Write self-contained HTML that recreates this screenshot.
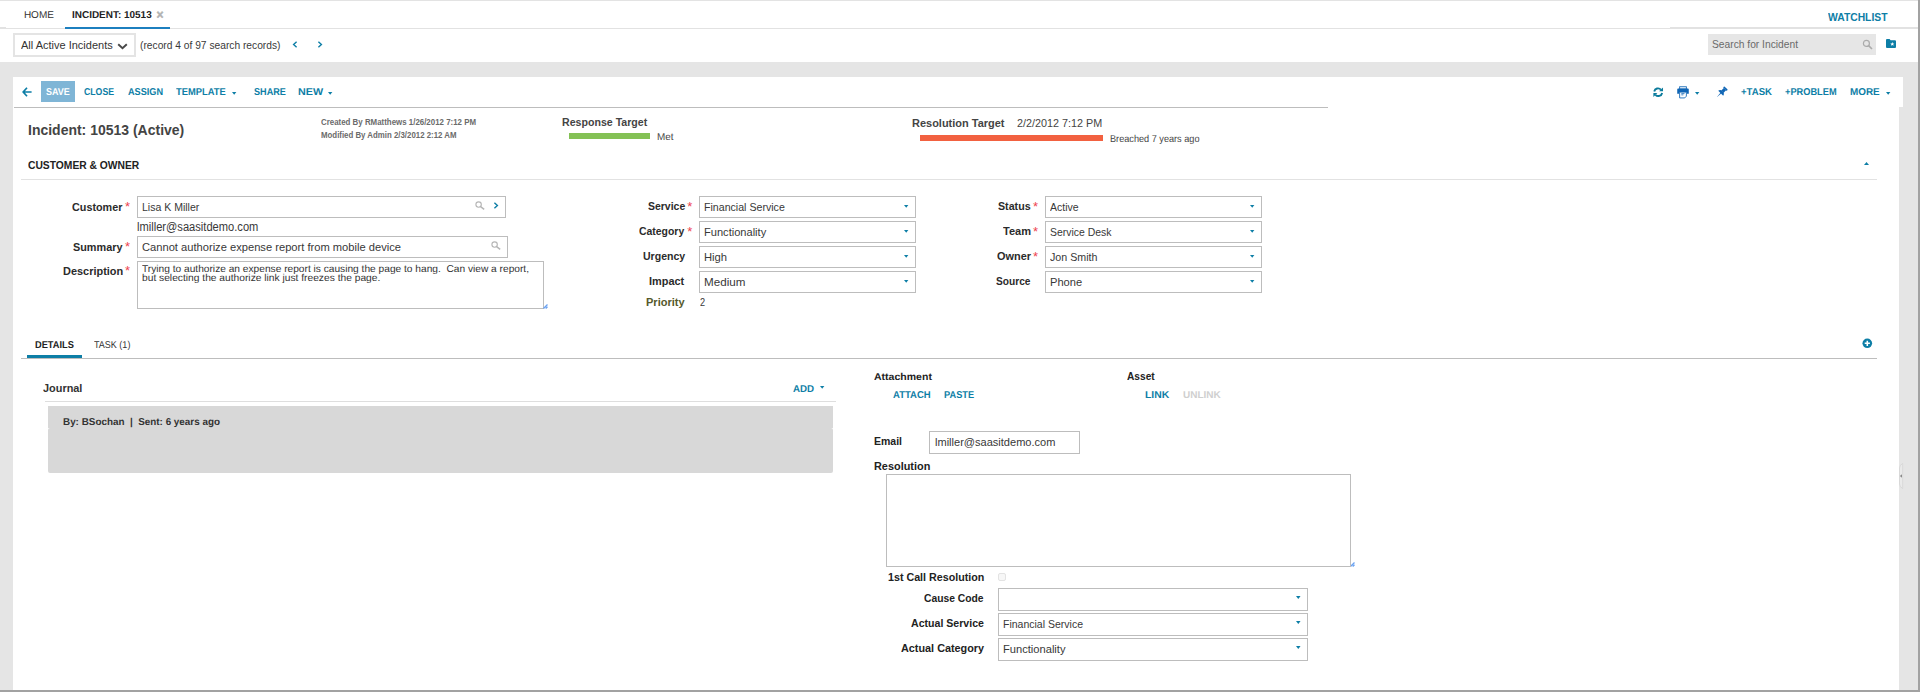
<!DOCTYPE html>
<html lang="en"><head><meta charset="utf-8"><title>Incident: 10513</title>
<style>
html,body{margin:0;padding:0;}
body{width:1920px;height:692px;overflow:hidden;background:#fff;position:relative;font-family:'Liberation Sans',sans-serif;}
.t{position:absolute;white-space:pre;line-height:20px;transform-origin:0 0;display:block;}
.g{text-rendering:geometricPrecision}
svg{position:absolute;overflow:visible}
</style></head>
<body>
<div class="grp" id="frame">
<div style="position:absolute;left:0px;top:0px;width:1918px;height:1px;background:#e3e3e3;"></div>
<div style="position:absolute;left:0px;top:28px;width:1918px;height:1px;background:#e2e2e2;"></div>
<div style="position:absolute;left:0px;top:27px;width:6px;height:1px;background:#e2e2e2;"></div>
<div style="position:absolute;left:1670px;top:27px;width:248px;height:1px;background:#e2e2e2;"></div>
<div style="position:absolute;left:0px;top:62px;width:1918px;height:15px;background:#e5e5e5;"></div>
<div style="position:absolute;left:0px;top:62px;width:13px;height:628px;background:#e5e5e5;"></div>
<div style="position:absolute;left:1903px;top:62px;width:15px;height:628px;background:#e5e5e5;"></div>
<div style="position:absolute;left:1899px;top:107px;width:4px;height:583px;background:#e5e5e5;"></div>
<div style="position:absolute;left:1918px;top:0px;width:2px;height:692px;background:#a2a2a2;"></div>
<div style="position:absolute;left:0px;top:690px;width:1920px;height:2px;background:#a2a2a2;"></div>
<svg style="left:1899px;top:463px" width="4" height="26" viewBox="0 0 4 26"><path d="M3.7 0.5 Q0.5 2 0.5 5 L0.5 21 Q0.5 24 3.7 25.5 Z" fill="#eaeaea" stroke="#d4d4d4" stroke-width="0.8"/><path d="M3 11.2 L0.8 13 L3 14.8 Z" fill="#8a8a8a"/></svg>
</div>
<div class="grp" id="recordbar">
<div style="position:absolute;left:13px;top:33px;width:119px;height:20px;border:2px solid #e4e4e4;background:#fff"></div>
<svg style="left:117px;top:43px" width="11" height="7" viewBox="0 0 11 7"><path d="M1.2 1.2 L5.5 5.3 L9.8 1.2" fill="none" stroke="#484848" stroke-width="1.9"/></svg>
<svg style="left:292px;top:41px" width="6" height="7" viewBox="0 0 6 7"><path d="M4.6 0.8 L1.6 3.5 L4.6 6.2" fill="none" stroke="#0d7ea6" stroke-width="1.4"/></svg>
<svg style="left:317px;top:41px" width="6" height="7" viewBox="0 0 6 7"><path d="M1.4 0.8 L4.4 3.5 L1.4 6.2" fill="none" stroke="#0d7ea6" stroke-width="1.4"/></svg>
<div style="position:absolute;left:1708px;top:34px;width:168px;height:21px;background:#e6e6e6;"></div>
<svg style="left:1862px;top:39px" width="11" height="11" viewBox="0 0 11 11"><circle cx="4.4" cy="4.4" r="3" fill="none" stroke="#ababab" stroke-width="1.2"/><path d="M6.6 6.6 L10 10" stroke="#ababab" stroke-width="1.6"/></svg>
<svg style="left:1886px;top:39px" width="10" height="9" viewBox="0 0 10 9"><path d="M0 1 Q0 0 1 0 L3.6 0 L4.6 1.2 L9 1.2 Q10 1.2 10 2.2 L10 8 Q10 9 9 9 L1 9 Q0 9 0 8 Z" fill="#0d7ea6"/><path d="M6.3 3 L6.9 4.4 L8.3 4.5 L7.2 5.4 L7.6 6.8 L6.3 6 L5 6.8 L5.4 5.4 L4.3 4.5 L5.7 4.4 Z" fill="#fff"/></svg>
<span class="t" style="left:20.60px;top:35px;font-size:11px;font-weight:400;color:#333;transform:scaleX(0.9998);">All Active Incidents</span>
<span class="t" style="left:140.30px;top:35px;font-size:11px;font-weight:400;color:#3a3a3a;transform:scaleX(0.9304);">(record 4 of 97 search records)</span>
<span class="t" style="left:1712.00px;top:34px;font-size:11px;font-weight:400;color:#6a6a6a;transform:scaleX(0.9313);">Search for Incident</span>
</div>
<div class="grp" id="toolbar">
<div style="position:absolute;left:14px;top:107px;width:1314px;height:1px;background:#bdbdbd;"></div>
<div style="position:absolute;left:41px;top:81px;width:34px;height:21px;background:#7fb5d6;"></div>
<svg style="left:22px;top:87px" width="10" height="10" viewBox="0 0 10 10"><path d="M5 0.8 L1.2 5 L5 9.2 M1.4 5 L9.6 5" fill="none" stroke="#0d7ea6" stroke-width="1.7"/></svg>
<svg style="left:231.8px;top:91.7px" width="4.4" height="2.8" viewBox="0 0 4.4 2.8"><path d="M0 0 L4.4 0 L2.2 2.8 Z" fill="#0d7ea6"/></svg>
<svg style="left:327.7px;top:91.7px" width="4.4" height="2.8" viewBox="0 0 4.4 2.8"><path d="M0 0 L4.4 0 L2.2 2.8 Z" fill="#0d7ea6"/></svg>
<svg style="left:1694.6px;top:91.7px" width="4.4" height="2.8" viewBox="0 0 4.4 2.8"><path d="M0 0 L4.4 0 L2.2 2.8 Z" fill="#0d7ea6"/></svg>
<svg style="left:1885.6px;top:91.7px" width="4.4" height="2.8" viewBox="0 0 4.4 2.8"><path d="M0 0 L4.4 0 L2.2 2.8 Z" fill="#0d7ea6"/></svg>
<svg style="left:1652.5px;top:87px" width="10.4" height="10.4" viewBox="0 0 11 11"><g fill="none" stroke="#0b7b9c" stroke-width="2"><path d="M1.3 4.7 A4.2 4.2 0 0 1 8.4 2.7"/><path d="M9.7 6.3 A4.2 4.2 0 0 1 2.6 8.3"/></g><path d="M10.6 0.4 L10.6 4.6 L6.4 4.6 Z M0.4 10.6 L0.4 6.4 L4.6 6.4 Z" fill="#0b7b9c"/></svg>
<svg style="left:1677px;top:85.6px" width="12" height="12.5" viewBox="0 0 12 13"><rect x="2.5" y="0.8" width="7" height="2.4" fill="#fff" stroke="#0f65b5" stroke-width="0.9"/><path d="M0 3.6 Q0 2.6 1 2.6 L11 2.6 Q12 2.6 12 3.6 L12 8 L9.6 8 L9.6 6.2 L2.4 6.2 L2.4 8 L0 8 Z" fill="#0f65b5"/><path d="M2.5 6.4 L9.5 6.4 L9.5 10.6 L7.8 12.4 L2.5 12.4 Z" fill="#fff" stroke="#0f65b5" stroke-width="0.9"/><path d="M4.2 7.9 L7.6 7.9 M4.2 9.2 L6.4 9.2" stroke="#0f65b5" stroke-width="1" opacity="0.8"/></svg>
<svg style="left:1716px;top:86.5px" width="11" height="11" viewBox="0 0 11 11"><g transform="rotate(45 5.5 5.5)" fill="#0f65b5"><rect x="3" y="-0.9" width="5" height="1.7" rx="0.6"/><rect x="3.9" y="0.6" width="3.2" height="3.6"/><path d="M3.9 4 L7.1 4 Q8.9 4.9 9 6.6 L2 6.6 Q2.1 4.9 3.9 4 Z"/><path d="M5 6.4 L6 6.4 L5.6 11.8 L5.4 11.8 Z"/></g></svg>
<span class="t g" style="left:46.00px;top:83px;font-size:10px;font-weight:700;color:#fff;transform:scaleX(0.8962);">SAVE</span>
<span class="t g" style="left:84.00px;top:83px;font-size:10px;font-weight:700;color:#0d7ea6;transform:scaleX(0.8707);">CLOSE</span>
<span class="t g" style="left:127.70px;top:83px;font-size:10px;font-weight:700;color:#0d7ea6;transform:scaleX(0.9141);">ASSIGN</span>
<span class="t g" style="left:176.25px;top:83px;font-size:10px;font-weight:700;color:#0d7ea6;transform:scaleX(0.9359);">TEMPLATE</span>
<span class="t g" style="left:254.40px;top:83px;font-size:10px;font-weight:700;color:#0d7ea6;transform:scaleX(0.9096);">SHARE</span>
<span class="t g" style="left:298.40px;top:83px;font-size:10px;font-weight:700;color:#0d7ea6;transform:scaleX(1.0752);">NEW</span>
<span class="t g" style="left:1741.00px;top:83px;font-size:10px;font-weight:700;color:#0d7ea6;transform:scaleX(0.9589);">+TASK</span>
<span class="t g" style="left:1784.70px;top:83px;font-size:10px;font-weight:700;color:#0d7ea6;transform:scaleX(0.9240);">+PROBLEM</span>
<span class="t g" style="left:1850.30px;top:83px;font-size:10px;font-weight:700;color:#0d7ea6;transform:scaleX(0.9900);">MORE</span>
</div>
<header class="grp" id="header">
<div style="position:absolute;left:569px;top:133px;width:81px;height:6px;background:#84c155;"></div>
<div style="position:absolute;left:920px;top:135px;width:183px;height:6px;background:#f26140;"></div>
<div style="position:absolute;left:21px;top:179px;width:1856px;height:1px;background:#e2e2e2;"></div>
<svg style="left:1864px;top:162px" width="5" height="3" viewBox="0 0 5 3"><path d="M0 3 L5 3 L2.5 0 Z" fill="#0d7ea6"/></svg>
<span class="t" style="left:28.00px;top:120px;font-size:14.5px;font-weight:700;color:#444;transform:scaleX(0.9646);">Incident: 10513 (Active)</span>
<span class="t" style="left:320.50px;top:112px;font-size:9px;font-weight:700;color:#6b6b6b;transform:scaleX(0.8778);">Created By RMatthews 1/26/2012 7:12 PM</span>
<span class="t" style="left:320.50px;top:125px;font-size:9px;font-weight:700;color:#6b6b6b;transform:scaleX(0.8721);">Modified By Admin 2/3/2012 2:12 AM</span>
<span class="t" style="left:561.75px;top:112px;font-size:11.5px;font-weight:700;color:#444;transform:scaleX(0.9221);">Response Target</span>
<span class="t g" style="left:656.50px;top:128px;font-size:10px;font-weight:400;color:#444;transform:scaleX(0.9897);">Met</span>
<span class="t" style="left:911.50px;top:113px;font-size:11.5px;font-weight:700;color:#444;transform:scaleX(0.9545);">Resolution Target</span>
<span class="t" style="left:1016.75px;top:113px;font-size:11.5px;font-weight:400;color:#444;transform:scaleX(0.9389);">2/2/2012 7:12 PM</span>
<span class="t g" style="left:1109.50px;top:130px;font-size:10px;font-weight:400;color:#444;transform:scaleX(0.9147);">Breached 7 years ago</span>
</header>
<section class="grp" id="form">
<div style="position:absolute;left:137px;top:196px;width:367px;height:20px;background:#fff;border:1px solid #bdbdbd;"></div>
<div style="position:absolute;left:137px;top:236px;width:369px;height:20px;background:#fff;border:1px solid #bdbdbd;"></div>
<div style="position:absolute;left:137px;top:261px;width:405px;height:46px;background:#fff;border:1px solid #bdbdbd;"></div>
<svg style="left:475px;top:201px" width="10" height="9" viewBox="0 0 10 9"><circle cx="3.6" cy="3.6" r="2.7" fill="none" stroke="#b5b5b5" stroke-width="1.1"/><path d="M5.6 5.6 L9.2 8.4" stroke="#b5b5b5" stroke-width="1.4"/></svg>
<svg style="left:491px;top:240.9px" width="10" height="9" viewBox="0 0 10 9"><circle cx="3.6" cy="3.6" r="2.7" fill="none" stroke="#b5b5b5" stroke-width="1.1"/><path d="M5.6 5.6 L9.2 8.4" stroke="#b5b5b5" stroke-width="1.4"/></svg>
<svg style="left:493px;top:202px" width="6" height="7" viewBox="0 0 6 7"><path d="M1.4 0.8 L4.4 3.5 L1.4 6.2" fill="none" stroke="#0d7ea6" stroke-width="1.4"/></svg>
<svg style="left:543px;top:304px" width="5" height="5" viewBox="0 0 5 5"><path d="M4.5 0.5 L0.5 4.5 M4.5 2.7 L2.7 4.5" stroke="#6aa2f2" stroke-width="1.3"/></svg>
<svg style="left:1350px;top:562px" width="5" height="5" viewBox="0 0 5 5"><path d="M4.5 0.5 L0.5 4.5 M4.5 2.7 L2.7 4.5" stroke="#6aa2f2" stroke-width="1.3"/></svg>
<div style="position:absolute;left:699px;top:196px;width:215px;height:20px;background:#fff;border:1px solid #bdbdbd;"></div>
<svg style="left:903.7px;top:204.6px" width="4.4" height="2.7" viewBox="0 0 4.4 2.7"><path d="M0 0 L4.4 0 L2.2 2.7 Z" fill="#0d7ea6"/></svg>
<div style="position:absolute;left:1045px;top:196px;width:215px;height:20px;background:#fff;border:1px solid #bdbdbd;"></div>
<svg style="left:1250px;top:204.6px" width="4.4" height="2.7" viewBox="0 0 4.4 2.7"><path d="M0 0 L4.4 0 L2.2 2.7 Z" fill="#0d7ea6"/></svg>
<div style="position:absolute;left:699px;top:221px;width:215px;height:20px;background:#fff;border:1px solid #bdbdbd;"></div>
<svg style="left:903.7px;top:229.6px" width="4.4" height="2.7" viewBox="0 0 4.4 2.7"><path d="M0 0 L4.4 0 L2.2 2.7 Z" fill="#0d7ea6"/></svg>
<div style="position:absolute;left:1045px;top:221px;width:215px;height:20px;background:#fff;border:1px solid #bdbdbd;"></div>
<svg style="left:1250px;top:229.6px" width="4.4" height="2.7" viewBox="0 0 4.4 2.7"><path d="M0 0 L4.4 0 L2.2 2.7 Z" fill="#0d7ea6"/></svg>
<div style="position:absolute;left:699px;top:246px;width:215px;height:20px;background:#fff;border:1px solid #bdbdbd;"></div>
<svg style="left:903.7px;top:254.6px" width="4.4" height="2.7" viewBox="0 0 4.4 2.7"><path d="M0 0 L4.4 0 L2.2 2.7 Z" fill="#0d7ea6"/></svg>
<div style="position:absolute;left:1045px;top:246px;width:215px;height:20px;background:#fff;border:1px solid #bdbdbd;"></div>
<svg style="left:1250px;top:254.6px" width="4.4" height="2.7" viewBox="0 0 4.4 2.7"><path d="M0 0 L4.4 0 L2.2 2.7 Z" fill="#0d7ea6"/></svg>
<div style="position:absolute;left:699px;top:271px;width:215px;height:20px;background:#fff;border:1px solid #bdbdbd;"></div>
<svg style="left:903.7px;top:279.6px" width="4.4" height="2.7" viewBox="0 0 4.4 2.7"><path d="M0 0 L4.4 0 L2.2 2.7 Z" fill="#0d7ea6"/></svg>
<div style="position:absolute;left:1045px;top:271px;width:215px;height:20px;background:#fff;border:1px solid #bdbdbd;"></div>
<svg style="left:1250px;top:279.6px" width="4.4" height="2.7" viewBox="0 0 4.4 2.7"><path d="M0 0 L4.4 0 L2.2 2.7 Z" fill="#0d7ea6"/></svg>
<span class="t" style="left:27.50px;top:155px;font-size:11.5px;font-weight:700;color:#222;transform:scaleX(0.8945);">CUSTOMER &amp; OWNER</span>
<span class="t" style="left:72.30px;top:197px;font-size:11.5px;font-weight:700;color:#2b2b2b;transform:scaleX(0.9388);">Customer</span>
<span class="t" style="left:73.25px;top:237px;font-size:11.5px;font-weight:700;color:#2b2b2b;transform:scaleX(0.9433);">Summary</span>
<span class="t" style="left:62.50px;top:261px;font-size:11.5px;font-weight:700;color:#2b2b2b;transform:scaleX(0.9515);">Description</span>
<span class="t" style="left:125.00px;top:197px;font-size:13px;font-weight:400;color:#ee4450;transform:scaleX(1.0000);">*</span>
<span class="t" style="left:125.00px;top:237px;font-size:13px;font-weight:400;color:#ee4450;transform:scaleX(1.0000);">*</span>
<span class="t" style="left:125.00px;top:261px;font-size:13px;font-weight:400;color:#ee4450;transform:scaleX(1.0000);">*</span>
<span class="t" style="left:142.00px;top:197px;font-size:11px;font-weight:400;color:#383838;transform:scaleX(0.9557);">Lisa K Miller</span>
<span class="t" style="left:137.00px;top:217px;font-size:12px;font-weight:400;color:#383838;transform:scaleX(0.9275);">lmiller@saasitdemo.com</span>
<span class="t" style="left:142.00px;top:237px;font-size:11px;font-weight:400;color:#383838;transform:scaleX(1.0133);">Cannot authorize expense report from mobile device</span>
<span class="t g" style="left:142.00px;top:260px;font-size:10px;font-weight:400;color:#333;transform:scaleX(1.0173);">Trying to authorize an expense report is causing the page to hang.  Can view a report,</span>
<span class="t g" style="left:142.00px;top:269px;font-size:10px;font-weight:400;color:#333;transform:scaleX(1.0231);">but selecting the authorize link just freezes the page.</span>
<span class="t" style="left:647.80px;top:196px;font-size:11.5px;font-weight:700;color:#2b2b2b;transform:scaleX(0.9087);">Service</span>
<span class="t" style="left:638.80px;top:221px;font-size:11.5px;font-weight:700;color:#2b2b2b;transform:scaleX(0.9065);">Category</span>
<span class="t" style="left:642.80px;top:246px;font-size:11.5px;font-weight:700;color:#2b2b2b;transform:scaleX(0.9168);">Urgency</span>
<span class="t" style="left:648.80px;top:271px;font-size:11.5px;font-weight:700;color:#2b2b2b;transform:scaleX(0.9493);">Impact</span>
<span class="t" style="left:646.30px;top:292px;font-size:11.5px;font-weight:700;color:#55592c;transform:scaleX(0.9611);">Priority</span>
<span class="t" style="left:687.30px;top:197px;font-size:13px;font-weight:400;color:#ee4450;transform:scaleX(1.0000);">*</span>
<span class="t" style="left:687.30px;top:222px;font-size:13px;font-weight:400;color:#ee4450;transform:scaleX(1.0000);">*</span>
<span class="t" style="left:703.60px;top:197px;font-size:11px;font-weight:400;color:#383838;transform:scaleX(0.9646);">Financial Service</span>
<span class="t" style="left:703.60px;top:222px;font-size:11px;font-weight:400;color:#383838;transform:scaleX(1.0070);">Functionality</span>
<span class="t" style="left:703.60px;top:247px;font-size:11px;font-weight:400;color:#383838;transform:scaleX(1.0210);">High</span>
<span class="t" style="left:703.60px;top:272px;font-size:11px;font-weight:400;color:#383838;transform:scaleX(1.0581);">Medium</span>
<span class="t" style="left:699.90px;top:292px;font-size:11px;font-weight:400;color:#383838;transform:scaleX(0.8327);">2</span>
<span class="t" style="left:998.40px;top:196px;font-size:11.5px;font-weight:700;color:#2b2b2b;transform:scaleX(0.9273);">Status</span>
<span class="t" style="left:1003.00px;top:221px;font-size:11.5px;font-weight:700;color:#2b2b2b;transform:scaleX(0.9588);">Team</span>
<span class="t" style="left:997.00px;top:246px;font-size:11.5px;font-weight:700;color:#2b2b2b;transform:scaleX(0.9498);">Owner</span>
<span class="t" style="left:995.50px;top:271px;font-size:11.5px;font-weight:700;color:#2b2b2b;transform:scaleX(0.8846);">Source</span>
<span class="t" style="left:1033.00px;top:197px;font-size:13px;font-weight:400;color:#ee4450;transform:scaleX(1.0000);">*</span>
<span class="t" style="left:1033.00px;top:222px;font-size:13px;font-weight:400;color:#ee4450;transform:scaleX(1.0000);">*</span>
<span class="t" style="left:1033.00px;top:247px;font-size:13px;font-weight:400;color:#ee4450;transform:scaleX(1.0000);">*</span>
<span class="t" style="left:1050.40px;top:197px;font-size:11px;font-weight:400;color:#383838;transform:scaleX(0.9543);">Active</span>
<span class="t" style="left:1050.40px;top:222px;font-size:11px;font-weight:400;color:#383838;transform:scaleX(0.9491);">Service Desk</span>
<span class="t" style="left:1050.40px;top:247px;font-size:11px;font-weight:400;color:#383838;transform:scaleX(0.9709);">Jon Smith</span>
<span class="t" style="left:1050.40px;top:272px;font-size:11px;font-weight:400;color:#383838;transform:scaleX(1.0122);">Phone</span>
</section>
<nav class="grp" id="subtabs">
<div style="position:absolute;left:21px;top:358px;width:1856px;height:1px;background:#bdbdbd;"></div>
<div style="position:absolute;left:27px;top:355px;width:55px;height:3px;background:#0d7ea6;"></div>
<svg style="left:1861.5px;top:338.2px" width="10.6" height="10.6" viewBox="0 0 11 11"><circle cx="5.5" cy="5.5" r="5" fill="#0d7ea6"/><path d="M5.5 2.8 V8.2 M2.8 5.5 H8.2" stroke="#fff" stroke-width="1.6"/></svg>
<span class="t g" style="left:35.00px;top:336px;font-size:10px;font-weight:700;color:#222;transform:scaleX(0.9252);">DETAILS</span>
<span class="t g" style="left:93.80px;top:336px;font-size:10px;font-weight:400;color:#333;transform:scaleX(0.9012);">TASK (1)</span>
</nav>
<section class="grp" id="journal">
<div style="position:absolute;left:45px;top:401px;width:791px;height:1px;background:#dedede;"></div>
<div style="position:absolute;left:48px;top:406px;width:785px;height:22px;background:#d8d8d8;"></div>
<div style="position:absolute;left:48px;top:428px;width:785px;height:45px;background:#d8d8d8;border-radius:2px;"></div>
<svg style="left:819.7px;top:386px" width="4.4" height="2.7" viewBox="0 0 4.4 2.7"><path d="M0 0 L4.4 0 L2.2 2.7 Z" fill="#0d7ea6"/></svg>
<span class="t" style="left:43.40px;top:378px;font-size:11.5px;font-weight:700;color:#333;transform:scaleX(0.9483);">Journal</span>
<span class="t g" style="left:793.40px;top:380px;font-size:10px;font-weight:700;color:#0d7ea6;transform:scaleX(0.9736);">ADD</span>
<span class="t g" style="left:62.50px;top:413px;font-size:10px;font-weight:700;color:#333;transform:scaleX(0.9876);">By: BSochan  |  Sent: 6 years ago</span>
</section>
<section class="grp" id="details">
<div style="position:absolute;left:929px;top:431px;width:149px;height:21px;background:#fff;border:1px solid #bdbdbd;"></div>
<div style="position:absolute;left:886px;top:474px;width:463px;height:91px;background:#fff;border:1px solid #bdbdbd;"></div>
<div style="position:absolute;left:998px;top:573px;width:6px;height:6px;background:#f7f7f7;border:1px solid #e3e3e3;border-radius:2px;"></div>
<div style="position:absolute;left:998px;top:588px;width:308px;height:21px;background:#fff;border:1px solid #bdbdbd;"></div>
<svg style="left:1295.8px;top:596.3px" width="4.6" height="2.9" viewBox="0 0 4.6 2.9"><path d="M0 0 L4.6 0 L2.3 2.9 Z" fill="#0d7ea6"/></svg>
<div style="position:absolute;left:998px;top:613px;width:308px;height:21px;background:#fff;border:1px solid #bdbdbd;"></div>
<svg style="left:1295.8px;top:621.3px" width="4.6" height="2.9" viewBox="0 0 4.6 2.9"><path d="M0 0 L4.6 0 L2.3 2.9 Z" fill="#0d7ea6"/></svg>
<div style="position:absolute;left:998px;top:638px;width:308px;height:21px;background:#fff;border:1px solid #bdbdbd;"></div>
<svg style="left:1295.8px;top:646.3px" width="4.6" height="2.9" viewBox="0 0 4.6 2.9"><path d="M0 0 L4.6 0 L2.3 2.9 Z" fill="#0d7ea6"/></svg>
<span class="t g" style="left:874.30px;top:368px;font-size:10px;font-weight:700;color:#222;transform:scaleX(1.0524);">Attachment</span>
<span class="t g" style="left:893.00px;top:386px;font-size:10px;font-weight:700;color:#0d7ea6;transform:scaleX(0.9514);">ATTACH</span>
<span class="t g" style="left:944.20px;top:386px;font-size:10px;font-weight:700;color:#0d7ea6;transform:scaleX(0.9230);">PASTE</span>
<span class="t" style="left:1127.00px;top:366px;font-size:11.5px;font-weight:700;color:#222;transform:scaleX(0.8842);">Asset</span>
<span class="t g" style="left:1144.50px;top:386px;font-size:10px;font-weight:700;color:#0d7ea6;transform:scaleX(1.0388);">LINK</span>
<span class="t g" style="left:1183.00px;top:386px;font-size:10px;font-weight:700;color:#cfcfcf;transform:scaleX(1.0005);">UNLINK</span>
<span class="t" style="left:874.30px;top:431px;font-size:11.5px;font-weight:700;color:#222;transform:scaleX(0.9124);">Email</span>
<span class="t" style="left:934.80px;top:432px;font-size:11px;font-weight:400;color:#383838;transform:scaleX(1.0035);">lmiller@saasitdemo.com</span>
<span class="t" style="left:874.30px;top:456px;font-size:11.5px;font-weight:700;color:#222;transform:scaleX(0.9475);">Resolution</span>
<span class="t" style="left:887.90px;top:567px;font-size:11.5px;font-weight:700;color:#222;transform:scaleX(0.9302);">1st Call Resolution</span>
<span class="t" style="left:923.60px;top:588px;font-size:11.5px;font-weight:700;color:#222;transform:scaleX(0.8967);">Cause Code</span>
<span class="t" style="left:910.80px;top:613px;font-size:11.5px;font-weight:700;color:#222;transform:scaleX(0.9197);">Actual Service</span>
<span class="t" style="left:901.10px;top:638px;font-size:11.5px;font-weight:700;color:#222;transform:scaleX(0.9423);">Actual Category</span>
<span class="t" style="left:1003.20px;top:614px;font-size:11px;font-weight:400;color:#383838;transform:scaleX(0.9550);">Financial Service</span>
<span class="t" style="left:1003.20px;top:639px;font-size:11px;font-weight:400;color:#383838;transform:scaleX(1.0119);">Functionality</span>
</section>
<nav class="grp" id="tabs">
<div style="position:absolute;left:65px;top:27px;width:105px;height:2px;background:#1c7fbf;"></div>
<span class="t g" style="left:23.90px;top:6px;font-size:10px;font-weight:400;color:#333;transform:scaleX(1.0000);">HOME</span>
<span class="t g" style="left:72.20px;top:6px;font-size:10px;font-weight:700;color:#222;transform:scaleX(0.9959);">INCIDENT: 10513</span>
<span class="t" style="left:156.60px;top:5px;font-size:12px;font-weight:700;color:#b2b2b2;transform:scaleX(1.0000);-webkit-text-stroke:0.5px #b2b2b2;">×</span>
<span class="t" style="left:1828.00px;top:7px;font-size:11px;font-weight:700;color:#0d7ea6;transform:scaleX(0.9393);">WATCHLIST</span>
</nav>
</body></html>
